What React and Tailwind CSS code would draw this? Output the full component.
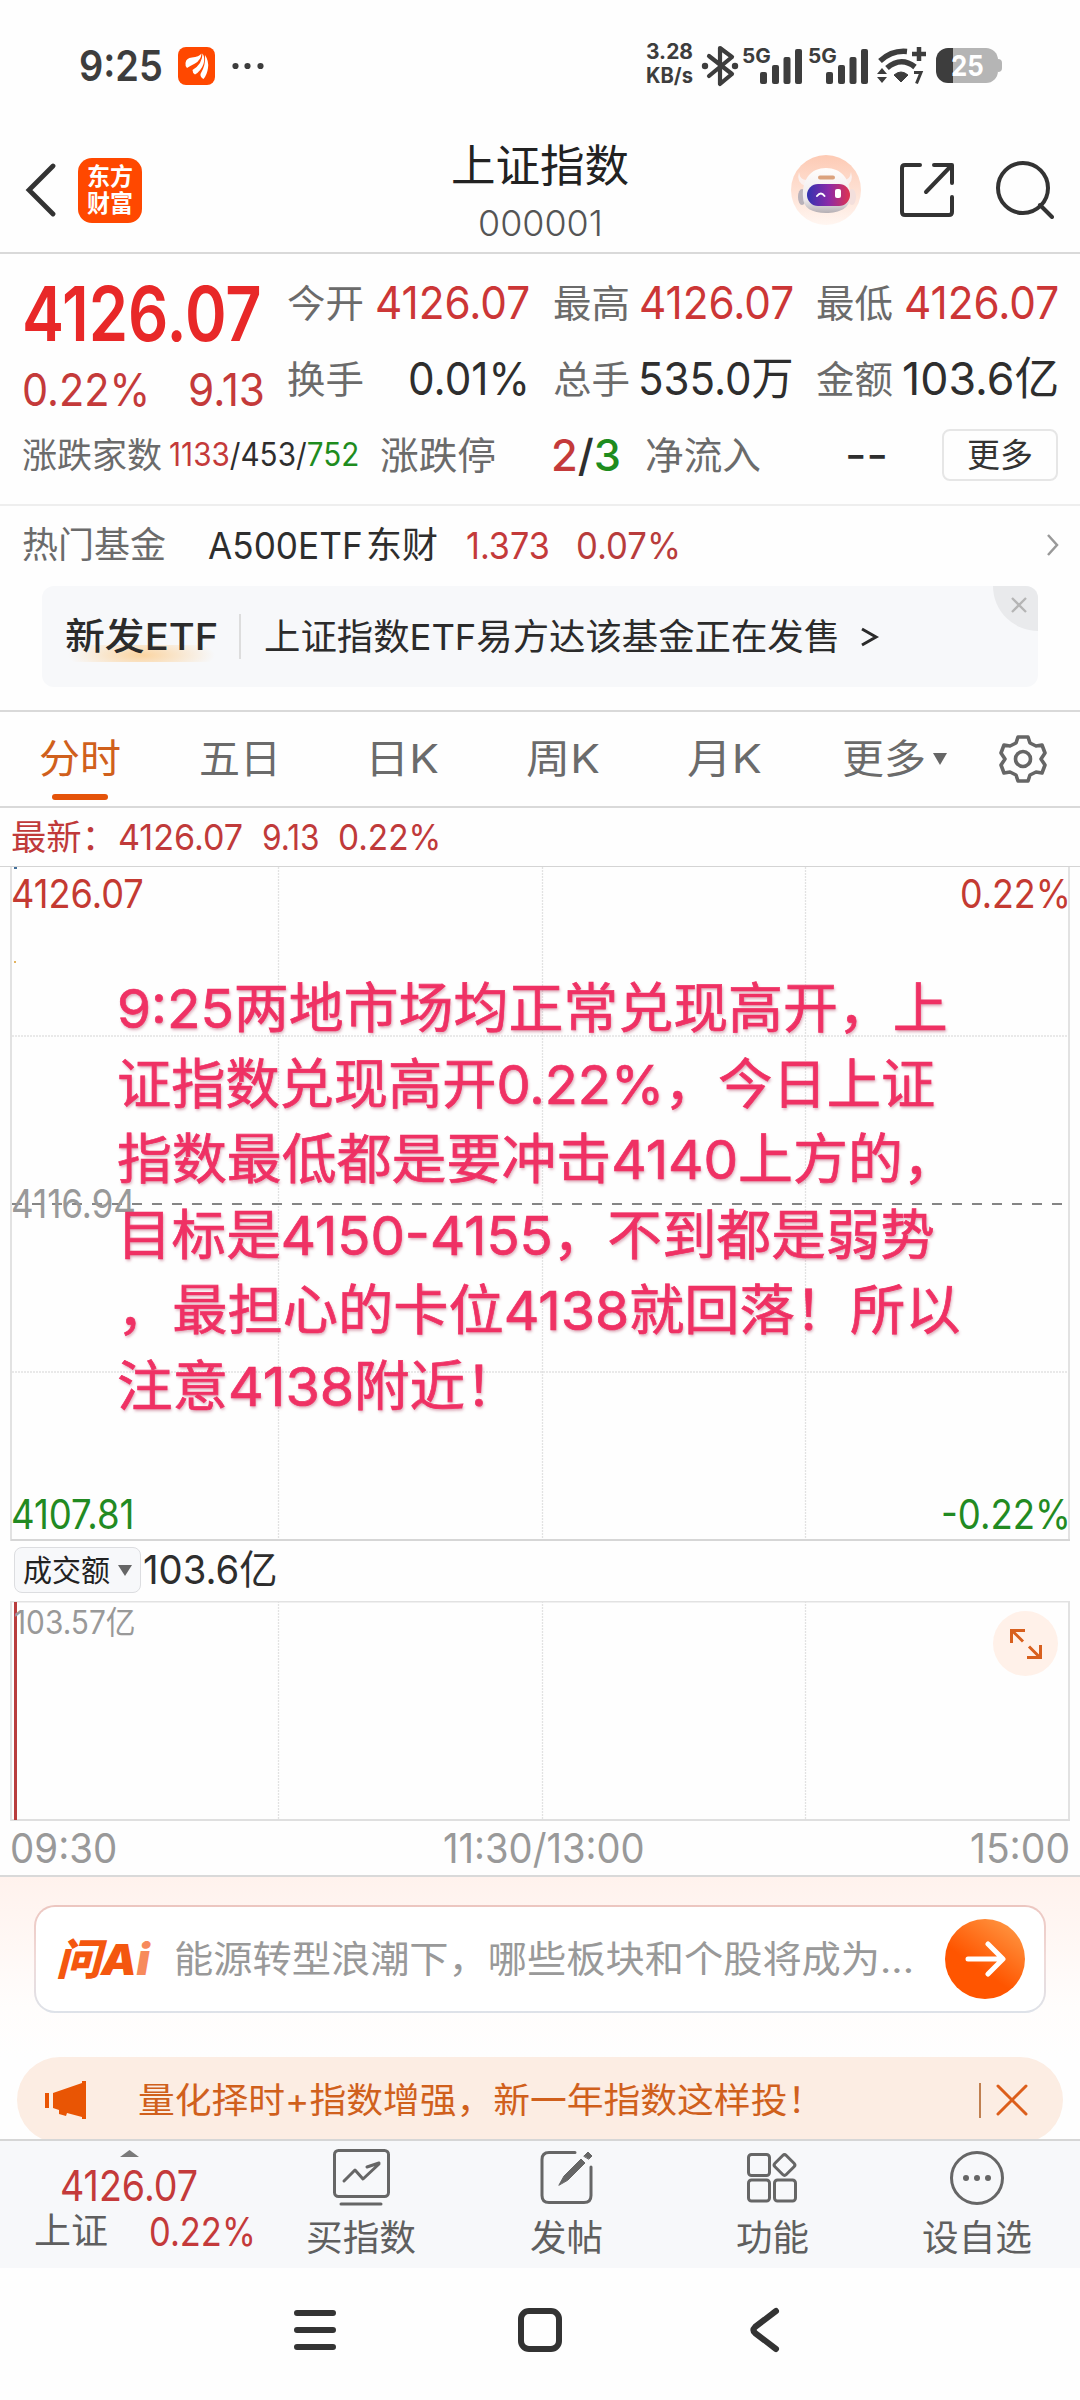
import { useLayoutEffect, useRef, useState } from "react";

// Condenses or widens one line of text so that it fills the width of its box.
function Fit({ className = "", children }) {
  const box = useRef(null);
  const line = useRef(null);
  const [scale, setScale] = useState(1);
  useLayoutEffect(() => {
    setScale(box.current.clientWidth / line.current.offsetWidth);
  }, [children]);
  return (
    <div ref={box} className={`shrink-0 leading-none whitespace-nowrap ${className}`}>
      <span ref={line} className="inline-block origin-left" style={{ transform: `scaleX(${scale})` }}>
        {children}
      </span>
    </div>
  );
}

function Signal() {
  return (
    <div className="relative h-[38px] w-[66px]">
      <Fit className="absolute top-[-1px] left-0 w-[29px] text-[20px] font-bold">5G</Fit>
      <svg className="absolute top-[2px] left-[18px]" width="44" height="35" fill="#3d3d3d">
        <rect x="0" y="23" width="7" height="12" rx="2" />
        <rect x="12" y="16" width="7" height="19" rx="2" />
        <rect x="23.500" y="8" width="7" height="27" rx="2" />
        <rect x="35" y="0" width="7" height="35" rx="2" />
      </svg>
    </div>
  );
}

function StatusBar() {
  return (
    <div className="flex h-[132px] items-center pb-[1px] pl-[79px] text-[#3d3d3d]">
      <Fit className="w-[84px] text-[42px] font-semibold">9:25</Fit>
      <svg className="ml-[15px] shrink-0" width="37" height="38" viewBox="0 0 37 38">
        <rect width="37" height="38" rx="8" fill="#ff4800" />
        <path d="M7.500 16Q8 11 14 10.500 21 10 23.500 6.500 23 13 17 16.500 12 19 9 21 7 19 7.500 16z" fill="#fff" />
        <path d="M15 23Q25 17 25 6.500 28 11 26 17 23.500 24 17.500 27.500 15 26 15 23z" fill="#fff" transform="translate(-0.500 0)" />
        <path d="M22.500 27Q28 18 27 8 31 14 30 21 29 28 25.500 32 22 30 22.500 27z" fill="#fff" />
      </svg>
      <svg className="ml-[17px] shrink-0" width="32" height="8" fill="#3d3d3d">
        <circle cx="3.500" cy="4" r="3.100" />
        <circle cx="15.500" cy="4" r="3.100" />
        <circle cx="28.500" cy="4" r="3.100" />
      </svg>
      <div className="ml-[382px] flex flex-col gap-[3px] pb-[4px]">
        <Fit className="w-[47px] text-[21px] font-bold">3.28</Fit>
        <Fit className="w-[47px] text-[21px] font-bold">KB/s</Fit>
      </div>
      <svg className="ml-[8px] shrink-0" width="38" height="42" viewBox="0 0 38 42" fill="none" stroke="#3d3d3d" strokeWidth="4.200" strokeLinejoin="round" strokeLinecap="round">
        <path d="M8 11L31 29 19 39V3l12 9L8 31" />
        <g fill="#3d3d3d" stroke="none">
          <circle cx="4" cy="21" r="3.200" />
          <circle cx="34" cy="21" r="3.200" />
        </g>
      </svg>
      <div className="ml-[3px] flex">
        <Signal />
        <Signal />
      </div>
      <svg className="ml-[3px] shrink-0" width="50" height="40" viewBox="0 0 50 40" fill="none" stroke="#3d3d3d">
        <path d="M3 15Q15 4 30 5.500" strokeWidth="5.500" />
        <path d="M10 22Q24 10 38 21" strokeWidth="5.500" />
        <path d="M17 29q7-6 14 0l-7 7z" fill="#3d3d3d" strokeWidth="1" />
        <path d="M42 1v14M35 8h14" strokeWidth="4.500" />
        <path d="M0 28l5-6 5 6zM0 31l5 6 5-6z" fill="#3d3d3d" stroke="none" />
        <path d="M37 26.500h7l-4.500 11" strokeWidth="3" />
      </svg>
      <div className="ml-[9px] flex items-center pb-[1px]">
        <div className="flex h-[35px] w-[62px] items-center justify-center rounded-[12px] bg-[linear-gradient(90deg,#3d3d3d_17px,#b5b5b5_17px)]">
          <Fit className="w-[33px] text-[29px] font-bold text-white">25</Fit>
        </div>
        <div className="h-[13px] w-[4px] rounded-r-[4px] bg-[#b5b5b5]" />
      </div>
    </div>
  );
}

function Robot() {
  return (
    <svg width="70" height="70" viewBox="0 0 70 70">
      <defs>
        <linearGradient id="halo" x1="0" y1="0" x2="0" y2="1">
          <stop offset="0" stopColor="#fdcab4" />
          <stop offset="1" stopColor="#fff6f1" />
        </linearGradient>
        <linearGradient id="visor">
          <stop offset="0" stopColor="#3233b0" />
          <stop offset="0.500" stopColor="#8a2aa8" />
          <stop offset="1" stopColor="#e0344f" />
        </linearGradient>
        <linearGradient id="shell" x1="0" y1="0" x2="0" y2="1">
          <stop offset="0" stopColor="#fffdfc" />
          <stop offset="0.700" stopColor="#eeeaec" />
          <stop offset="1" stopColor="#b5afb4" />
        </linearGradient>
      </defs>
      <circle cx="35" cy="35" r="35" fill="url(#halo)" />
      <path d="M8 17q1 9 9 8l-3 6Q5 27 8 17zM60 17q-1 9-9 8l4 6q8-4 5-14z" fill="#fbf0ee" />
      <ellipse cx="11" cy="42" rx="4" ry="8" fill="#b9b2ba" />
      <ellipse cx="61" cy="42" rx="4" ry="8" fill="#f3dfdc" />
      <path d="M12 42C11 24 20 13 35 13s25 11 24 29c0 11-10 16-24 16s-23-5-23-16z" fill="url(#shell)" />
      <rect x="27" y="20.500" width="17" height="4" rx="2" fill="#dba27d" />
      <rect x="16" y="29" width="43" height="22" rx="11" fill="url(#visor)" />
      <path d="M26 41q4-5 7.500 0" fill="none" stroke="#fff" strokeWidth="2" strokeLinecap="round" />
      <rect x="44" y="34" width="6" height="9" rx="2" fill="#fff" />
    </svg>
  );
}

function Header() {
  return (
    <div className="flex h-[122px] items-center justify-between border-b-2 border-[#d9d9d9] pb-[4px]">
      <div className="flex w-[360px] items-center pl-[25px]">
        <svg width="32" height="54" viewBox="0 0 32 54" fill="none" stroke="#333" strokeWidth="4.800" strokeLinecap="round">
          <path d="M28 3L4 27l24 24" />
        </svg>
        <div className="ml-[21px] flex h-[65px] w-[64px] flex-col items-center justify-center gap-[3px] rounded-[14px] bg-[#ff4800] text-[24px] font-bold text-white">
          <Fit className="w-[46px]">东方</Fit>
          <Fit className="w-[46px]">财富</Fit>
        </div>
      </div>
      <div className="flex flex-col items-center gap-[18px] pt-[5px]">
        <Fit className="w-[178px] text-[44px] text-[#222]">上证指数</Fit>
        <Fit className="w-[125px] text-[35px] font-light text-[#555]">000001</Fit>
      </div>
      <div className="flex w-[360px] items-center justify-end pr-[26px]">
        <Robot />
        <svg className="ml-[37px]" width="58" height="58" viewBox="0 0 58 58" fill="none" stroke="#333" strokeWidth="4" strokeLinecap="round" strokeLinejoin="round">
          <path d="M22 4H7q-3 0-3 3v44q0 3 3 3h44q3 0 3-3V36M36 4h18v18M53 5L28 31" />
        </svg>
        <svg className="ml-[38px]" width="60" height="58" viewBox="0 0 60 58" fill="none" stroke="#333" strokeWidth="4" strokeLinecap="round">
          <circle cx="29" cy="27" r="25" />
          <path d="M46 44l12 12" />
        </svg>
      </div>
    </div>
  );
}

function Stat({ label, value, valueClass }) {
  return (
    <div className="flex items-center justify-between">
      <Fit className="w-[77px] text-[38px] text-[#6b6b6b]">{label}</Fit>
      <Fit className={`text-[45px] ${valueClass}`}>{value}</Fit>
    </div>
  );
}

function Quote() {
  return (
    <div className="h-[252px] border-b-2 border-[#eee] pr-[21px] pl-[22px]">
      <div className="flex">
        <div className="w-[265px] pt-[22px]">
          <Fit className="w-[240px] text-[75px] font-semibold text-[#e82828]">4126.07</Fit>
          <div className="mt-[16px] flex justify-between pr-[22px] text-[45px] text-[#c43a3a]">
            <Fit className="w-[128px]">0.22%</Fit>
            <Fit className="w-[77px]">9.13</Fit>
          </div>
        </div>
        <div className="grid flex-1 grid-cols-[243px_241px_243px] content-start justify-between gap-y-[31px] pt-[26px]">
          <Stat label="今开" value="4126.07" valueClass="w-[155px] text-[#cc3636]" />
          <Stat label="最高" value="4126.07" valueClass="w-[155px] text-[#cc3636]" />
          <Stat label="最低" value="4126.07" valueClass="w-[155px] text-[#cc3636]" />
          <Stat label="换手" value="0.01%" valueClass="w-[122px] text-[#2e2e2e]" />
          <Stat label="总手" value="535.0万" valueClass="w-[156px] text-[#2e2e2e]" />
          <Stat label="金额" value="103.6亿" valueClass="w-[157px] text-[#2e2e2e]" />
        </div>
      </div>
      <div className="mt-[18px] flex h-[50px] items-center">
        <Fit className="w-[140px] text-[35px] text-[#6b6b6b]">涨跌家数</Fit>
        <Fit className="ml-[7px] w-[190px] text-[32px] text-[#2e2e2e]">
          <span className="text-[#c43a3a]">1133</span>/453/<span className="text-[#1e8c1e]">752</span>
        </Fit>
        <Fit className="ml-[21px] w-[116px] text-[38px] text-[#6b6b6b]">涨跌停</Fit>
        <Fit className="ml-[55px] w-[70px] text-[44px] font-medium text-[#2e2e2e]">
          <span className="text-[#c43a3a]">2</span>/<span className="text-[#1e8c1e]">3</span>
        </Fit>
        <Fit className="ml-[24px] w-[116px] text-[38px] text-[#6b6b6b]">净流入</Fit>
        <Fit className="ml-[84px] w-[43px] text-[40px] font-medium text-[#2e2e2e]">--</Fit>
        <div className="ml-[54px] flex h-[52px] w-[116px] items-center justify-center rounded-[8px] border-2 border-[#e6e6e6]">
          <Fit className="w-[66px] text-[33px] text-[#333]">更多</Fit>
        </div>
      </div>
    </div>
  );
}

function HotFund() {
  return (
    <div className="flex h-[80px] items-center pb-[2px] pl-[22px]">
      <Fit className="w-[144px] text-[36px] text-[#6b6b6b]">热门基金</Fit>
      <Fit className="ml-[42px] w-[155px] text-[37px] text-[#2e2e2e]">A500ETF</Fit>
      <Fit className="ml-[3px] w-[72px] text-[36px] text-[#2e2e2e]">东财</Fit>
      <Fit className="ml-[28px] w-[84px] text-[37px] text-[#c43a3a]">1.373</Fit>
      <Fit className="ml-[26px] w-[105px] text-[37px] text-[#b83c3c]">0.07%</Fit>
      <svg className="ml-[365px]" width="14" height="24" fill="none" stroke="#999" strokeWidth="2.500">
        <path d="M2 2l9 10-9 10" />
      </svg>
    </div>
  );
}

function Banner() {
  return (
    <div className="h-[124px] pr-[42px] pl-[42px]">
      <div className="relative flex h-[101px] items-center overflow-hidden rounded-[12px] bg-[#f7f8fa] pl-[23px] text-[#2b2b2b]">
        <div className="bg-[radial-gradient(ellipse_50%_110%_at_50%_60%,#fbd4a0_0%,#fbd4a000_100%)] bg-[length:147px_17px] bg-[position:3px_35px] bg-no-repeat py-[8px]">
          <Fit className="w-[153px] text-[37px] font-medium">新发ETF</Fit>
        </div>
        <div className="ml-[21px] h-[45px] w-[2px] bg-[#ddd]" />
        <Fit className="ml-[23px] w-[576px] text-[36px]">上证指数ETF易方达该基金正在发售</Fit>
        <svg className="ml-[20px]" width="20" height="24" fill="none" stroke="#2b2b2b" strokeWidth="3">
          <path d="M2 4l14 8L2 20" />
        </svg>
        <div className="absolute top-0 right-0 flex h-[45px] w-[45px] items-center justify-center rounded-bl-full bg-[#e9eaec] pb-[8px] pl-[6px]">
          <svg width="16" height="16" stroke="#b5b5b5" strokeWidth="2.300">
            <path d="M1 1l14 14M15 1L1 15" />
          </svg>
        </div>
      </div>
    </div>
  );
}

function Tabs() {
  return (
    <div className="flex h-[98px] items-center border-y-2 border-[#d9d9d9] pl-[39px] text-[40px] text-[#6b6b6b]">
      <div className="relative">
        <Fit className="w-[82px] text-[#d0601c]">分时</Fit>
        <div className="absolute top-[55px] left-[13px] h-[6px] w-[56px] rounded-[3px] bg-[#e5530a]" />
      </div>
      <Fit className="ml-[78px] w-[82px]">五日</Fit>
      <Fit className="ml-[84px] w-[74px]">日K</Fit>
      <Fit className="ml-[87px] w-[74px]">周K</Fit>
      <Fit className="ml-[87px] w-[75px]">月K</Fit>
      <Fit className="ml-[80px] w-[84px]">更多</Fit>
      <svg className="ml-[7px]" width="14" height="12" fill="#666">
        <path d="M0 0h14L7 12z" />
      </svg>
      <svg className="ml-[50px]" width="52" height="52" viewBox="-26 -26 52 52" fill="none" stroke="#666" strokeWidth="3.600" strokeLinejoin="round">
        <path d="M-5-22H5L7-16 13-13 19-14 22-6 18 0 22 6 19 14 13 13 7 16 5 22H-5L-7 16-13 13-19 14-22 6-18 0-22-6-19-14-13-13-7-16Z" />
        <circle r="7.500" />
      </svg>
    </div>
  );
}

function LatestLine() {
  return (
    <div className="flex h-[58px] items-center pl-[11px] text-[#c03a3a]">
      <Fit className="w-[106px] text-[35px]">最新：</Fit>
      <Fit className="ml-[1px] w-[125px] text-[36px]">4126.07</Fit>
      <Fit className="ml-[19px] w-[58px] text-[36px]">9.13</Fit>
      <Fit className="ml-[18px] w-[103px] text-[36px]">0.22%</Fit>
    </div>
  );
}

function PriceChart() {
  return (
    <div className="relative h-[675px] border-t border-[#d4d4d4]">
      <svg className="absolute top-0 left-0" width="1080" height="675" fill="none">
        <path d="M278.500 0v673M542.500 0v673M805.500 0v673M12 169h1057M12 505h1057" stroke="#e2e2e2" strokeWidth="1.300" strokeDasharray="2 1" />
        <path d="M11 0v674M1069 0v674" stroke="#e2e2e2" strokeWidth="2" />
        <path d="M11 673h1059" stroke="#d6d6d6" strokeWidth="2" />
        <path d="M12 337h1055" stroke="#858585" strokeWidth="2" strokeDasharray="10 10" />
        <rect x="14" y="0" width="3" height="2" fill="#44709a" />
        <rect x="14" y="94" width="2" height="2" fill="#e3b35f" />
      </svg>
      <div className="absolute right-[9px] left-[11px] top-[7px] flex justify-between text-[40px] text-[#c43a32]">
        <Fit className="w-[133px]">4126.07</Fit>
        <Fit className="w-[111px]">0.22%</Fit>
      </div>
      <div className="absolute top-[317px] left-[11px] text-[40px] text-[#999]">
        <Fit className="w-[125px]">4116.94</Fit>
      </div>
      <div className="absolute right-[9px] bottom-[6px] left-[11px] flex justify-between text-[41px] text-[#228a22]">
        <Fit className="w-[123px]">4107.81</Fit>
        <Fit className="w-[130px]">-0.22%</Fit>
      </div>
      <div className="absolute top-[115px] left-[117px] flex flex-col gap-[21.600px] text-[54px] text-[#ef3164] [-webkit-text-stroke:0.700px_#ef3164] [text-shadow:1px_2px_3px_#b0406070]">
        <Fit className="w-[831px]">9:25两地市场均正常兑现高开，上</Fit>
        <Fit className="w-[818px]">证指数兑现高开0.22%，今日上证</Fit>
        <Fit className="w-[841px]">指数最低都是要冲击4140上方的，</Fit>
        <Fit className="w-[818px]">目标是4150-4155，不到都是弱势</Fit>
        <Fit className="w-[844px]">，最担心的卡位4138就回落！所以</Fit>
        <Fit className="w-[404px]">注意4138附近！</Fit>
      </div>
    </div>
  );
}

function VolumeChart() {
  return (
    <div className="h-[336px] border-b-2 border-[#d9d9d9]">
      <div className="flex h-[60px] items-center pb-[2px] pl-[14px]">
        <div className="flex h-[46px] w-[127px] items-center rounded-[8px] border border-[#dcdde0] bg-[#f7f8fa] pl-[8px]">
          <Fit className="w-[87px] text-[30px] text-[#222]">成交额</Fit>
          <svg className="ml-[8px]" width="14" height="11" fill="#666">
            <path d="M0 0h14L7 11z" />
          </svg>
        </div>
        <Fit className="ml-[2px] w-[135px] text-[40px] text-[#2e2e2e]">103.6亿</Fit>
      </div>
      <div className="relative h-[221px]">
        <svg className="absolute top-0 left-0" width="1080" height="221" fill="none">
          <path d="M278.500 0v219M542.500 0v219M805.500 0v219" stroke="#e2e2e2" strokeWidth="1.300" strokeDasharray="2 1" />
          <path d="M11 .5h1059M11 0v220M1069 0v220" stroke="#e2e2e2" strokeWidth="2" />
          <path d="M11 219h1059" stroke="#dfdfdf" strokeWidth="2" />
          <path d="M15.500 1v218" stroke="#b93d3d" strokeWidth="3" />
        </svg>
        <div className="absolute top-[6px] left-[14px]">
          <Fit className="w-[122px] text-[32px] text-[#999]">103.57亿</Fit>
        </div>
        <div className="absolute top-[10px] right-[22px] flex h-[65px] w-[65px] items-center justify-center rounded-full bg-[#fff1e9]">
          <svg width="32" height="32" fill="none" stroke="#d8601e" strokeWidth="3">
            <path d="M1.500 15V2.500H15M2.500 3L13 13.500M30.500 17v12.500H17M29.500 29L19 18.500" />
          </svg>
        </div>
      </div>
      <div className="flex h-[53px] items-center justify-between pr-[10px] pl-[10px] text-[41px] text-[#999]">
        <Fit className="w-[107px]">09:30</Fit>
        <Fit className="w-[202px]">11:30/13:00</Fit>
        <Fit className="w-[100px]">15:00</Fit>
      </div>
    </div>
  );
}

function AskAi() {
  return (
    <div className="h-[180px] bg-[linear-gradient(#fff2ed,#fffdfc_130px,#fefefe)] pt-[28px] pr-[34px] pl-[34px]">
      <div className="rounded-[21px] bg-[linear-gradient(#ecc6c0,#f0dad8_50%,#dde2e9)] p-[2px]">
        <div className="flex h-[104px] items-center rounded-[19px] bg-white pl-[20px]">
          <Fit className="w-[94px] text-[43px] font-black text-[#f4570f] italic">
            问A<span className="text-[#f78a5c]">i</span>
          </Fit>
          <Fit className="ml-[24px] w-[740px] text-[37px] text-[#999]">能源转型浪潮下，哪些板块和个股将成为...</Fit>
          <div className="ml-[31px] flex h-[80px] w-[80px] shrink-0 items-center justify-center rounded-full bg-[linear-gradient(215deg,#ff9440_10%,#ff5500_60%)]">
            <svg width="42" height="38" fill="none" stroke="#fff" strokeWidth="5" strokeLinecap="round" strokeLinejoin="round">
              <path d="M4 19h34M24 4l15 15-15 15" />
            </svg>
          </div>
        </div>
      </div>
    </div>
  );
}

function Promo() {
  return (
    <div className="h-[82px] overflow-hidden pr-[17px] pl-[17px]">
      <div className="flex h-[86px] items-center rounded-full bg-[#fcede3] pl-[27px] text-[#d0601c]">
        <svg width="44" height="38" fill="#e95504">
          <path d="M1 12h4v15H1zM9 12L38 2V0h4v38h-4v-2l-15-4-1 3-7-2v-4l-6-2z" />
        </svg>
        <Fit className="ml-[50px] w-[686px] text-[35px]">量化择时+指数增强，新一年指数这样投！</Fit>
        <div className="ml-[155px] h-[35px] w-[1.500px] bg-[#c08050]" />
        <svg className="ml-[15px]" width="32" height="32" stroke="#dc5f1c" strokeWidth="3" strokeLinecap="round">
          <path d="M2 2l28 28M30 2L2 30" />
        </svg>
      </div>
    </div>
  );
}

function Action({ label, width, children }) {
  return (
    <div className="flex w-[205.300px] flex-col items-center">
      <svg width="60" height="60" viewBox="0 0 60 60" fill="none" stroke="#666" strokeWidth="3" strokeLinecap="round" strokeLinejoin="round">
        {children}
      </svg>
      <Fit className={`mt-[13px] text-[36px] text-[#5f5f5f] ${width}`}>{label}</Fit>
    </div>
  );
}

function BottomBar() {
  return (
    <div className="flex h-[129px] border-t-2 border-[#d6d6d6] bg-[#f7f8fa]">
      <div className="w-[259px] pt-[9px] pl-[34px] text-[#c43a3a]">
        <svg className="ml-[86px]" width="19" height="7" fill="#7a7a7a">
          <path d="M0 7L9.500 0 19 7z" />
        </svg>
        <Fit className="mt-[8px] ml-[26px] w-[138px] text-[42px]">4126.07</Fit>
        <div className="mt-[5px] flex h-[38px] items-center">
          <Fit className="w-[74px] text-[36px] text-[#5f5f5f]">上证</Fit>
          <Fit className="ml-[41px] w-[107px] text-[39px]">0.22%</Fit>
        </div>
      </div>
      <div className="flex pt-[6px]">
        <Action label="买指数" width="w-[110px]">
          <rect x="3.500" y="3.500" width="54" height="46" rx="4" />
          <path d="M13 34l11-11 8 9 16-15M36 20l12-4M10 57h40" />
        </Action>
        <Action label="发帖" width="w-[73px]">
          <path d="M38 5.500H12q-7 0-7 7v36q0 7 7 7h35q7 0 7-7V20" />
          <path d="M22 38l5-9 17-17 4 4-17 17zM47 9l4-4 4 4-3 3z" fill="#666" strokeWidth="1" />
        </Action>
        <Action label="功能" width="w-[73px]">
          <rect x="6.500" y="7.500" width="21" height="21" rx="3" />
          <rect x="6.500" y="33" width="21" height="21" rx="3" />
          <rect x="32.500" y="33" width="21" height="21" rx="3" />
          <rect x="-8" y="-8" width="16" height="16" rx="2.500" transform="translate(42.500 18) rotate(45)" />
        </Action>
        <Action label="设自选" width="w-[110px]">
          <circle cx="30" cy="31" r="25.500" />
          <g fill="#666" stroke="none">
            <circle cx="19" cy="31" r="3" />
            <circle cx="30" cy="31" r="3" />
            <circle cx="41" cy="31" r="3" />
          </g>
        </Action>
      </div>
    </div>
  );
}

function SystemNav() {
  return (
    <div className="flex h-[132px] items-center justify-center gap-[177px] pb-[8px]">
      <svg width="48" height="48" fill="none" stroke="#333" strokeWidth="6" strokeLinecap="round">
        <path d="M6 7h36M6 24h36M6 41h36" />
      </svg>
      <svg width="48" height="48" fill="none" stroke="#333" strokeWidth="6">
        <rect x="5" y="5" width="38" height="38" rx="8" />
      </svg>
      <svg width="48" height="48" fill="none" stroke="#333" strokeWidth="6" strokeLinecap="round" strokeLinejoin="round">
        <path d="M35 5L14 21q-3 3 0 6l21 16" />
      </svg>
    </div>
  );
}

export default function App() {
  return (
    <div className="h-[2400px] w-[1080px] overflow-hidden bg-[#fefefe] font-['Inter','Noto_Sans_CJK_SC',sans-serif]">
      <StatusBar />
      <Header />
      <Quote />
      <HotFund />
      <Banner />
      <Tabs />
      <LatestLine />
      <PriceChart />
      <VolumeChart />
      <AskAi />
      <Promo />
      <BottomBar />
      <SystemNav />
    </div>
  );
}
